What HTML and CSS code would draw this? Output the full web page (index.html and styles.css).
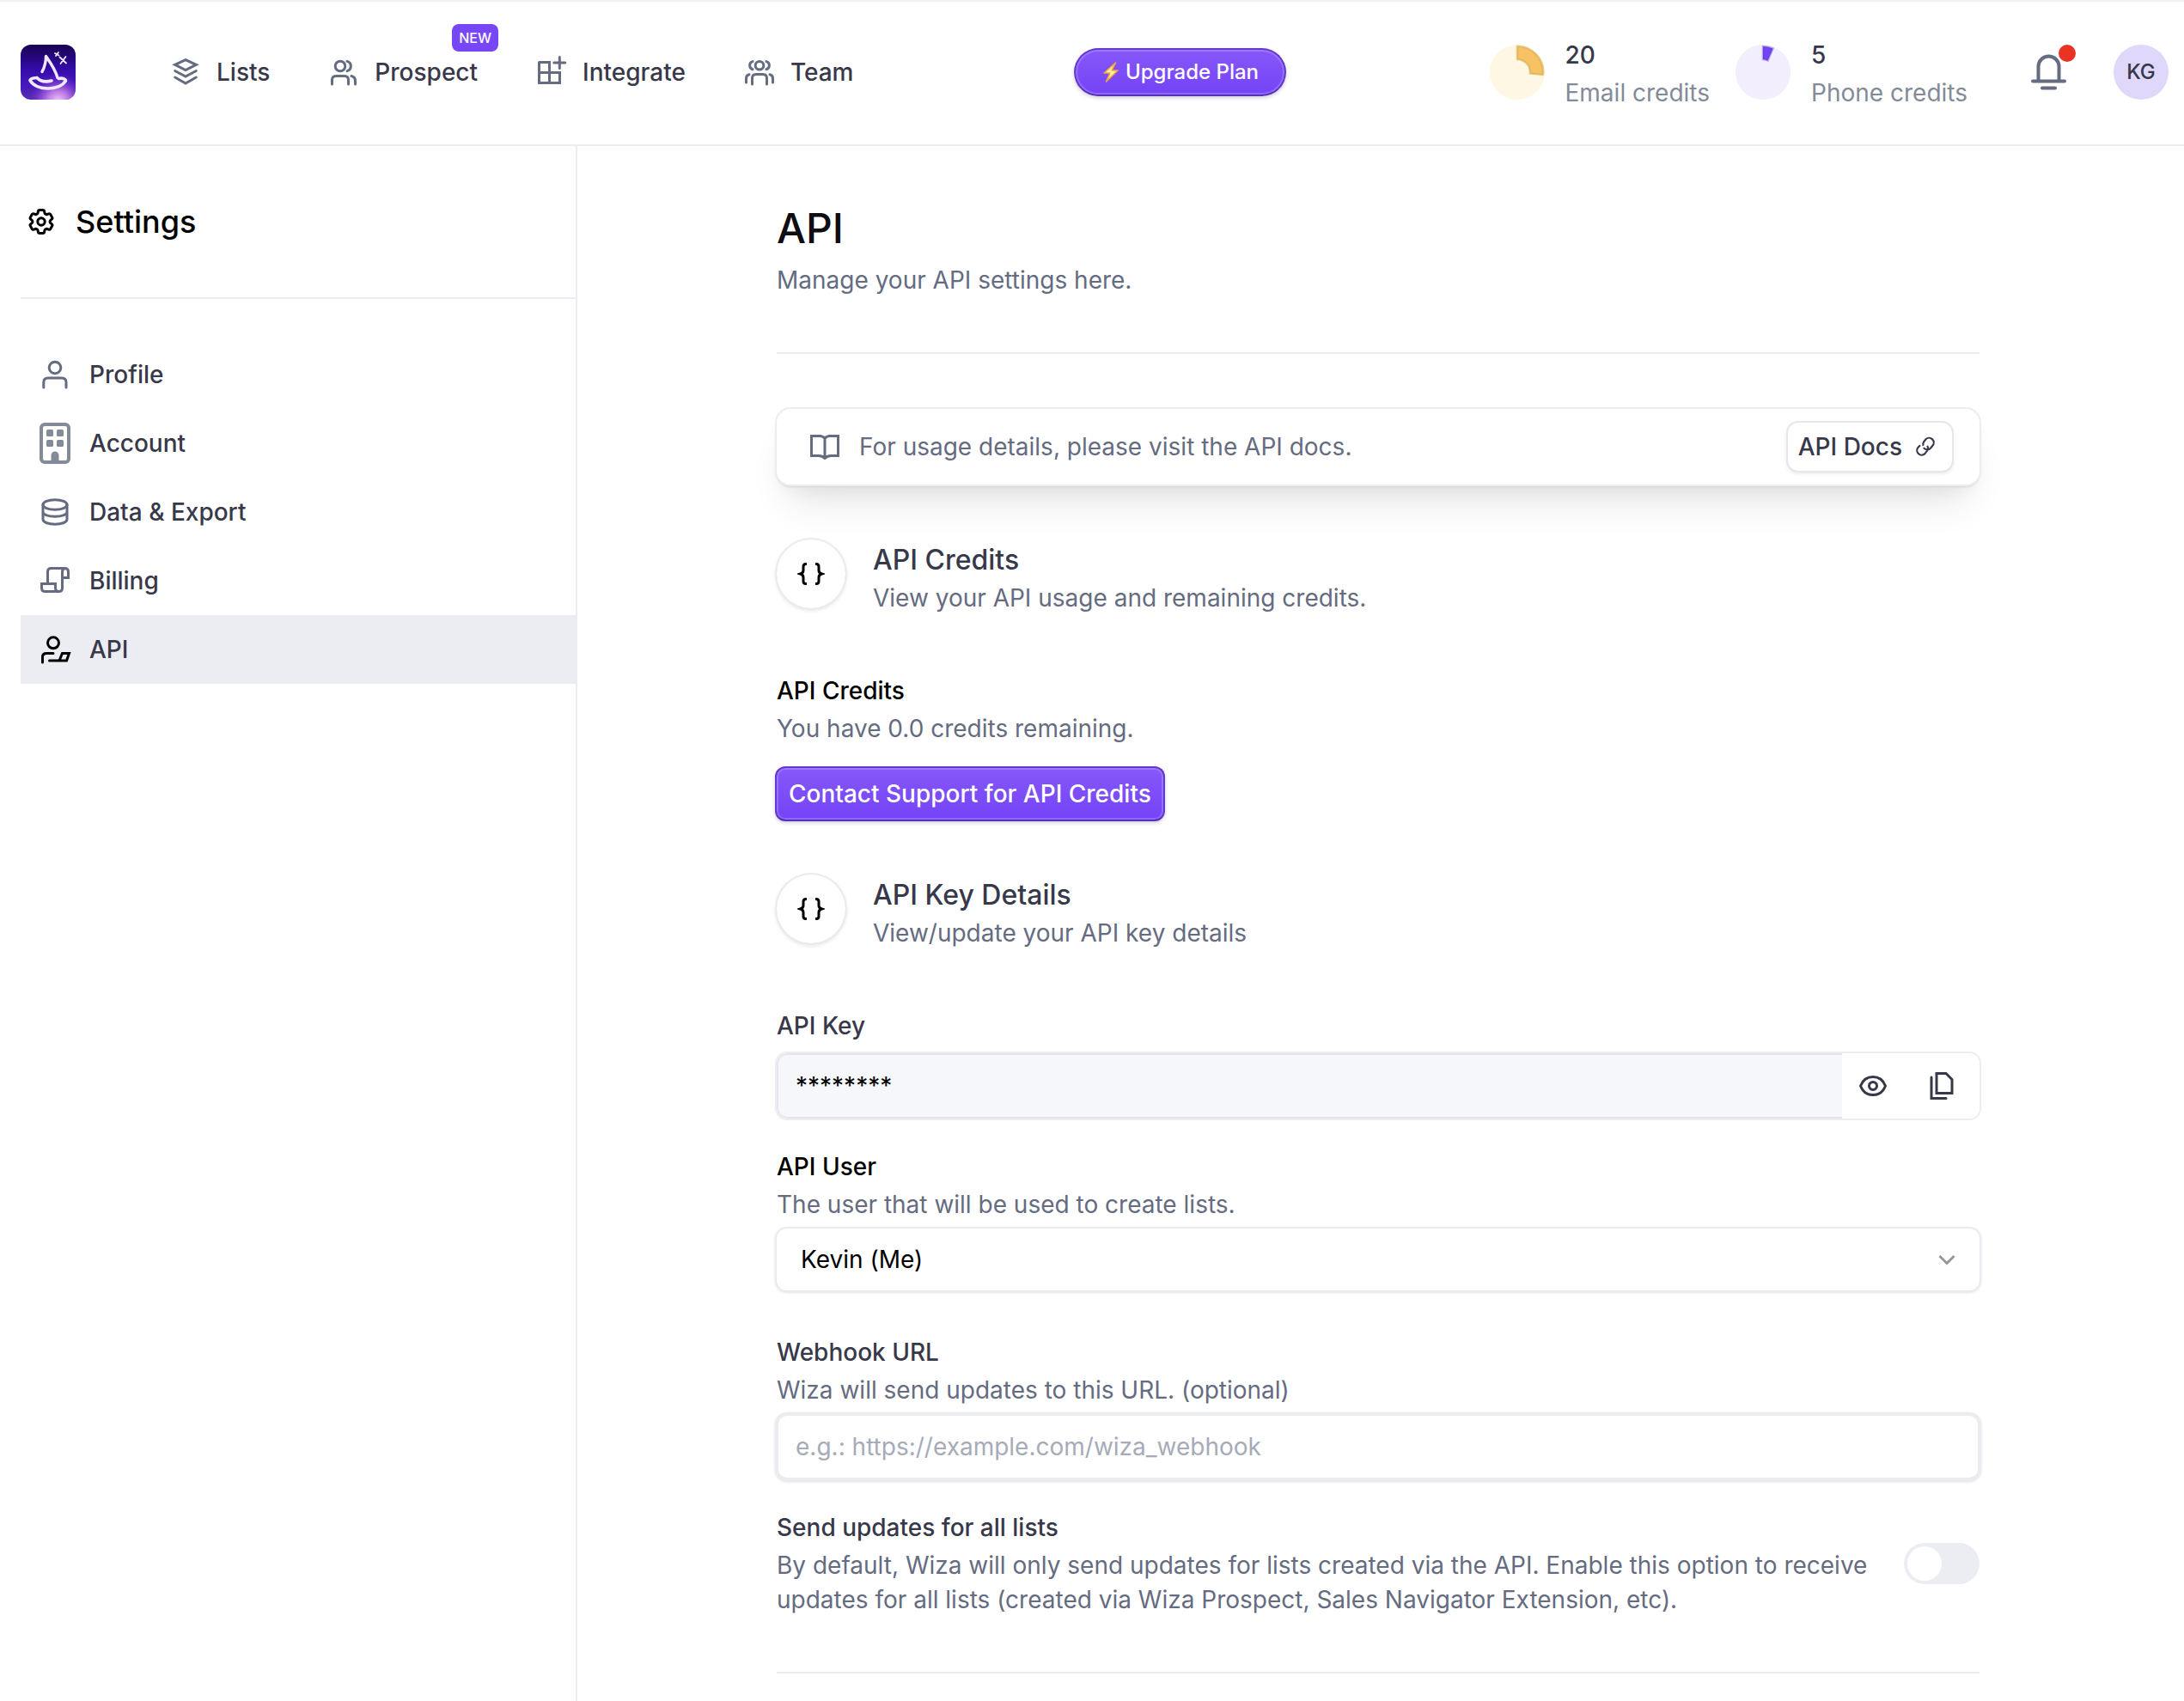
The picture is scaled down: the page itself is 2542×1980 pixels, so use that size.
FILE: index.html
```html
<!DOCTYPE html>
<html lang="en">
<head>
<meta charset="utf-8">
<meta name="viewport" content="width=device-width, initial-scale=1">
<title>API settings</title>
<link rel="stylesheet" href="styles.css">
</head>
<body>
<header class="topbar">
  <div class="topbar-left">
    <a class="logo" href="#" aria-label="Home">
      <svg width="64" height="64" viewBox="0 0 64 64">
        <defs>
          <linearGradient id="sky" x1="0" y1="0" x2="0" y2="1">
            <stop offset="0" stop-color="#17034f"/><stop offset=".45" stop-color="#350bab"/><stop offset=".8" stop-color="#4a1cba"/><stop offset="1" stop-color="#5a2fae"/>
          </linearGradient>
          <radialGradient id="glow" cx=".68" cy="1.04" r=".52">
            <stop offset="0" stop-color="#f6d3f8"/><stop offset=".4" stop-color="#c983ec" stop-opacity=".85"/><stop offset="1" stop-color="#7a2be0" stop-opacity="0"/>
          </radialGradient>
        </defs>
        <rect width="64" height="64" rx="12" fill="url(#sky)"/>
        <rect width="64" height="64" rx="12" fill="url(#glow)"/>
        <g fill="none" stroke="#f0e8ff" stroke-linecap="round" stroke-linejoin="round">
          <path d="M25 31.500C28 26 29.500 20 29.500 13.500C34 20 40 28 43 38.500" stroke-width="3.400"/>
          <path d="M19 38.500C15 38.500 11 40 11 41.500C18 54 45 54 52.500 42C52 39.500 48 38.500 44.500 39.500M19 38.500C23 43 30 43.500 36 42" stroke-width="3.600"/>
          <path d="M45.500 14.500L53 21.500M52.500 14L46.500 22M40 10L44.500 12.500M44 9L41 13" stroke-width="1.800"/>
        </g>
      </svg>
    </a>
    <nav class="nav" aria-label="Main">
      <a class="nav-item" href="#">
        <svg class="icon" viewBox="0 0 40 40"><path d="M20 5.700L32.300 11.300L20 17.500L7.700 11.300ZM7.700 18.500L20 25L32.300 18.500M7.700 26L20 33L32.300 26"/></svg>
        Lists
      </a>
      <a class="nav-item" href="#">
        <svg class="icon" viewBox="0 0 40 40"><circle cx="16" cy="13" r="5.800"/><path d="M24 7.400a5.800 5.800 0 0 1 0 11.200M6.500 34V29q0-4.500 4.500-4.500H21q4.500 0 4.500 4.500V34M29 24.500q4.500 1 4.500 6V34"/></svg>
        Prospect
        <span class="badge">NEW</span>
      </a>
      <a class="nav-item" href="#">
        <svg class="icon" viewBox="0 0 40 40"><path d="M5.500 8.500H17.500V32.500M5.500 8.500V32.500H29.500V20.500H5.500M29.300 2.500V15.500M22.800 9H35.800"/></svg>
        Integrate
      </a>
      <a class="nav-item" href="#">
        <svg class="icon" viewBox="0 0 40 40"><ellipse cx="20" cy="12.200" rx="4.800" ry="4.800"/><path d="M12 7.600C7.500 8.500 7.500 15.500 12 16.800M28 7.600C32.500 8.500 32.500 15.500 28 16.800M11.500 34V27q0-4.500 4.500-4.500H24q4.500 0 4.500 4.500V34M8 22.800Q4.500 23.500 4.500 27.500V32M32 22.800Q35.500 23.500 35.500 27.500V32"/></svg>
        Team
      </a>
    </nav>
  </div>
  <button class="upgrade" type="button">
    <svg width="18" height="24" viewBox="0 0 18 24"><path d="M14.500 1L1 13H8L3.500 23L17 10H10Z" fill="#fff3a3" stroke="#f0a63c" stroke-width="1.600" stroke-linejoin="round"/></svg>
    Upgrade Plan
  </button>
  <div class="topbar-right">
    <div class="credit">
      <svg width="64" height="64" viewBox="0 0 64 64"><circle cx="32" cy="32" r="32" fill="#fef7e4"/><path d="M32 2A30 30 0 0 1 61.900 35L46.900 33.500A15 15 0 0 0 32 17Z" fill="#f6c263" stroke="#dcb056" stroke-opacity=".7" stroke-width="2.500"/></svg>
      <div><b>20</b><span>Email credits</span></div>
    </div>
    <div class="credit">
      <svg width="64" height="64" viewBox="0 0 64 64"><circle cx="32" cy="32" r="32" fill="#f2eefe"/><path d="M32 2A30 30 0 0 1 43.500 4.500L37.500 18.500A15 15 0 0 0 32 17Z" fill="#7445f7" stroke="#5a35c4" stroke-opacity=".4" stroke-width="2.500"/></svg>
      <div><b>5</b><span>Phone credits</span></div>
    </div>
    <button class="bell" type="button" aria-label="Notifications">
      <svg width="48" height="48" viewBox="0 0 48 48"><path d="M12.500 34V17.500a12 12 0 0 1 24 0V34M6 34.500H43M17 42.500H32"/></svg>
      <span class="dot"></span>
    </button>
    <button class="avatar" type="button">KG</button>
  </div>
</header>
<div class="layout">
  <aside class="sidebar">
    <h2 class="sidebar-title">
      <svg width="36" height="36" viewBox="0 0 24 24"><path d="M9.594 3.940c.09-.542.56-.94 1.110-.94h2.593c.55 0 1.020.398 1.110.94l.213 1.281c.063.374.313.686.645.87.074.04.147.083.22.127.325.196.72.257 1.075.124l1.217-.456a1.125 1.125 0 0 1 1.370.49l1.296 2.247a1.125 1.125 0 0 1-.26 1.431l-1.003.827c-.293.241-.438.613-.43.992a7.723 7.723 0 0 1 0 .255c-.008.378.137.75.43.991l1.004.827c.424.35.534.955.26 1.430l-1.298 2.247a1.125 1.125 0 0 1-1.369.491l-1.217-.456c-.355-.133-.75-.072-1.076.124a6.470 6.470 0 0 1-.22.128c-.331.183-.581.495-.644.869l-.213 1.281c-.09.543-.56.94-1.110.94h-2.594c-.55 0-1.019-.398-1.110-.94l-.213-1.281c-.062-.374-.312-.686-.644-.87a6.520 6.520 0 0 1-.22-.127c-.325-.196-.72-.257-1.076-.124l-1.217.456a1.125 1.125 0 0 1-1.369-.49l-1.297-2.247a1.125 1.125 0 0 1 .26-1.431l1.004-.827c.292-.24.437-.613.43-.991a6.932 6.932 0 0 1 0-.255c.007-.38-.138-.751-.43-.992l-1.004-.827a1.125 1.125 0 0 1-.26-1.430l1.297-2.247a1.125 1.125 0 0 1 1.370-.491l1.216.456c.356.133.751.072 1.076-.124.072-.044.146-.086.22-.128.332-.183.582-.495.644-.869l.214-1.280Z"/><circle cx="12" cy="12" r="2.800"/></svg>
      Settings
    </h2>
    <nav class="side-nav" aria-label="Settings">
      <a class="side-item" href="#">
        <svg class="icon" viewBox="0 0 40 40"><circle cx="20" cy="12" r="6.800"/><path d="M6.800 35V29q0-5 5-5H28q5 0 5 5V35"/></svg>
        Profile
      </a>
      <a class="side-item" href="#">
        <svg class="icon" viewBox="0 0 40 48"><g transform="translate(2 0)" fill="#838b98" stroke="none"><path fill-rule="evenodd" d="M6 0H30a6 6 0 0 1 6 6V42a6 6 0 0 1-6 6H6a6 6 0 0 1-6-6V6a6 6 0 0 1 6-6ZM6 4a2 2 0 0 0-2 2V42a2 2 0 0 0 2 2H30a2 2 0 0 0 2-2V6a2 2 0 0 0-2-2Z"/><rect x="8" y="8" width="8" height="8" rx="1.500"/><rect x="20" y="8" width="8" height="8" rx="1.500"/><rect x="8" y="20" width="8" height="8" rx="1.500"/><rect x="20" y="20" width="8" height="8" rx="1.500"/><path d="M13.500 45V38a4.500 4.500 0 0 1 9 0V45Z"/></g></svg>
        Account
      </a>
      <a class="side-item" href="#">
        <svg class="icon" viewBox="0 0 40 40"><ellipse cx="20" cy="11.500" rx="14" ry="5.800"/><path d="M6 11.500V28.500C6 36 34 36 34 28.500V11.500M6 20C6 27 34 27 34 20"/></svg>
        Data &amp; Export
      </a>
      <a class="side-item" href="#">
        <svg class="icon" viewBox="0 0 40 40"><path d="M11.500 23.500V9.500q0-4 4-4H32q-3.500.5-3.500 4V28.500q0 4-4 4H8.500q-4 0-4-4V23.500H20.500V28.500q0 4 4 4M32 5.500q3.500.5 3.500 4V16.500H28.500"/></svg>
        Billing
      </a>
      <a class="side-item active" href="#" aria-current="page">
        <svg class="icon" viewBox="0 0 40 40"><circle cx="18" cy="12.300" r="6.500"/><path d="M5.500 35V29q0-4.500 4.500-4.500H18M13.500 33H33.500L36.500 24.500H28.500L25 33"/></svg>
        API
      </a>
    </nav>
  </aside>
  <main class="main">
    <div class="content">
      <div class="page-head">
        <h1>API</h1>
        <p>Manage your API settings here.</p>
      </div>
      <div class="notice">
        <svg class="icon" viewBox="0 0 40 40"><path d="M20 33.500V10M20 33.500Q17 30.500 13 30.500H4.500V7.500H14Q18 7.500 20 10.500Q22 7.500 26 7.500H35.500V30.500H27Q23 30.500 20 33.500Z"/></svg>
        <p>For usage details, please visit the API docs.</p>
        <a class="docs" href="#">API Docs
          <svg width="26" height="26" viewBox="0 0 24 24"><path d="M10 13a5 5 0 0 0 7.540.54l2-2.500a5 5 0 0 0-7.070-7.070l-2 2.500a5 5 0 0 0-.8 4.500M14 11a5 5 0 0 1 .5 4.500l-3 4a5 5 0 0 1-7.070-7.070l2-2"/></svg>
        </a>
      </div>

      <section>
        <div class="section-head">
          <span class="disc"><svg width="32" height="32" viewBox="0 0 32 32"><path d="M11 4.500H10Q7 4.500 7 7.500V12Q7 15 3.500 16Q7 17 7 20V24.500Q7 27.500 10 27.500H11M21 4.500H22Q25 4.500 25 7.500V12Q25 15 28.500 16Q25 17 25 20V24.500Q25 27.500 22 27.500H21"/></svg></span>
          <div>
            <h2>API Credits</h2>
            <p>View your API usage and remaining credits.</p>
          </div>
        </div>
        <div class="text-pair">
          <h3 class="black">API Credits</h3>
          <p>You have 0.0 credits remaining.</p>
        </div>
        <button class="primary" type="button">Contact Support for API Credits</button>
      </section>

      <section>
        <div class="section-head">
          <span class="disc"><svg width="32" height="32" viewBox="0 0 32 32"><path d="M11 4.500H10Q7 4.500 7 7.500V12Q7 15 3.500 16Q7 17 7 20V24.500Q7 27.500 10 27.500H11M21 4.500H22Q25 4.500 25 7.500V12Q25 15 28.500 16Q25 17 25 20V24.500Q25 27.500 22 27.500H21"/></svg></span>
          <div>
            <h2>API Key Details</h2>
            <p>View/update your API key details</p>
          </div>
        </div>
        <div class="field">
          <label for="api-key">API Key</label>
          <div class="key-box">
            <input id="api-key" type="text" value="********" readonly>
            <button type="button" aria-label="Show key"><svg class="icon" viewBox="0 0 40 40"><path d="M5.500 20C8 13.500 13.500 9.500 20 9.500S32 13.500 34.500 20C32 26.500 26.500 30.500 20 30.500S8 26.500 5.500 20Z"/><circle cx="20" cy="20" r="4.500"/></svg></button>
            <button type="button" aria-label="Copy key"><svg class="icon" viewBox="0 0 40 40"><path d="M14 5.500H25L32 12.500V28.500H14ZM8 10V34.500H25"/></svg></button>
          </div>
        </div>
        <div class="field user-field">
          <div class="text-pair">
            <label class="black" for="api-user">API User</label>
            <p>The user that will be used to create lists.</p>
          </div>
          <div class="select-box">
            <select id="api-user"><option>Kevin (Me)</option></select>
            <svg width="24" height="24" viewBox="0 0 24 24"><path d="M3.500 8L12 16.500L20.500 8"/></svg>
          </div>
        </div>
        <div class="field">
          <div class="text-pair">
            <label for="webhook">Webhook URL</label>
            <p>Wiza will send updates to this URL. (optional)</p>
          </div>
          <input class="text-input" id="webhook" type="url" placeholder="e.g.: https://example.com/wiza_webhook">
        </div>
        <div class="toggle-row">
          <div class="text-pair">
            <label for="all-lists">Send updates for all lists</label>
            <p>By default, Wiza will only send updates for lists created via the API. Enable this option to receive updates for all lists (created via Wiza Prospect, Sales Navigator Extension, etc).</p>
          </div>
          <input class="toggle" id="all-lists" type="checkbox" role="switch">
        </div>
      </section>
    </div>
  </main>
</div>
</body>
</html>
```
FILE: styles.css
```css
:root {
  --ink: #373849;
  --muted: #656b80;
  --line: #ecedf2;
  --violet: #7747f7;
}

* { box-sizing: border-box; }

body {
  margin: 0;
  min-height: 100vh;
  display: flex;
  flex-direction: column;
  background: #fff;
  color: var(--ink);
  font: 400 28px/40px Inter, "Liberation Sans", sans-serif;
}

h1, h2, h3, p { margin: 0; }
a { color: inherit; text-decoration: none; }
button, input, select { font: inherit; color: inherit; margin: 0; }
button { cursor: pointer; }
svg { display: block; flex: none; fill: none; }

.icon {
  width: 40px;
  height: 40px;
  stroke: var(--muted);
  stroke-width: 3;
  stroke-linecap: round;
}

/* Top bar */
.topbar {
  display: flex;
  align-items: center;
  justify-content: space-between;
  height: 170px;
  padding: 0 18px 2px 24px;
  border-top: 2px solid #f1f1f1;
  border-bottom: 2px solid var(--line);
}
.topbar-left { display: flex; align-items: center; gap: 108px; padding-right: 20px; }
.nav { display: flex; gap: 66px; }
.nav-item {
  position: relative;
  display: flex;
  align-items: center;
  gap: 16px;
  font-weight: 500;
}
.badge {
  position: absolute;
  right: -24px;
  bottom: 44px;
  padding: 0 8px;
  border-radius: 8px;
  background: var(--violet);
  color: #fff;
  font-size: 16px;
  line-height: 32px;
}

.upgrade, .primary {
  border: 2px solid #6339cf;
  border-bottom-color: #5530b8;
  background: linear-gradient(#8658fa, #7443f6);
  box-shadow: inset 0 0 0 2px rgba(255, 255, 255, .2), 0 2px 4px rgba(30, 20, 80, .2);
  color: #fff;
  font-weight: 500;
}
.upgrade {
  display: flex;
  align-items: center;
  gap: 8px;
  height: 56px;
  padding: 0 30px 0 32px;
  border-radius: 28px;
  font-size: 24px;
}

.topbar-right { display: flex; align-items: center; }
.credit { display: flex; align-items: center; gap: 24px; margin-right: 30px; }
.credit div { display: flex; flex-direction: column; gap: 4px; padding-top: 4px; }
.credit b { font-weight: 500; }
.credit span { color: #838b98; }
.bell {
  position: relative;
  margin: 0 52px 0 40px;
  padding: 0;
  border: 0;
  background: none;
}
.bell svg { stroke: var(--muted); stroke-width: 4; stroke-linecap: round; }
.dot {
  position: absolute;
  top: -8px;
  right: -8px;
  width: 20px;
  height: 20px;
  border-radius: 50%;
  background: #ea3323;
}
.avatar {
  width: 64px;
  height: 64px;
  padding: 0;
  border: 0;
  border-radius: 50%;
  background: #e0d8fa;
  font-size: 24px;
  font-weight: 500;
}

/* Page layout */
.layout { display: flex; flex: 1; }
.sidebar {
  flex: none;
  width: 672px;
  padding-left: 24px;
  border-right: 2px solid var(--line);
}
.sidebar-title {
  display: flex;
  align-items: center;
  gap: 22px;
  height: 178px;
  padding-left: 6px;
  border-bottom: 2px solid var(--line);
  color: #000;
  font-size: 36px;
  font-weight: 500;
}
.sidebar-title svg { stroke: #000; stroke-width: 2; }
.side-nav { padding-top: 48px; }
.side-item {
  display: flex;
  align-items: center;
  gap: 20px;
  height: 80px;
  padding-left: 20px;
  font-weight: 500;
}
.side-item .icon { height: 48px; }
.side-item.active { background: var(--line); }
.side-item.active .icon { stroke: #000; }

.main { flex: 1; padding: 64px 6px 32px 0; }
.content { max-width: 1400px; margin: 0 auto; }
.content p { color: var(--muted); }

.page-head {
  padding-bottom: 64px;
  border-bottom: 2px solid var(--line);
}
h1 {
  margin-bottom: 8px;
  color: #0e0e12;
  font-size: 48px;
  line-height: 64px;
  font-weight: 500;
}

.notice {
  display: flex;
  align-items: center;
  gap: 20px;
  height: 88px;
  margin: 64px 0;
  padding: 0 32px 0 36px;
  border-radius: 16px;
  background: #fff;
  box-shadow: 0 0 0 2px var(--line), 0 2px 2px 1px #d3d6dc, 0 32px 48px -16px rgba(0, 0, 0, .12), 0 12px 24px -8px rgba(0, 0, 0, .06);
}
.notice p { flex: 1; }
.docs {
  display: flex;
  align-items: center;
  gap: 14px;
  height: 56px;
  padding: 0 18px 0 12px;
  border-radius: 12px;
  box-shadow: 0 0 0 2px #e5e7ee, 0 2px 4px 1px rgba(30, 40, 70, .12);
  font-weight: 500;
}
.docs svg { stroke: var(--ink); stroke-width: 2; }

section { margin-bottom: 64px; }
.section-head {
  display: flex;
  gap: 32px;
  margin-bottom: 68px;
}
.section-head h2 { font-size: 32px; line-height: 48px; font-weight: 500; }
.disc {
  display: flex;
  align-items: center;
  justify-content: center;
  width: 80px;
  height: 80px;
  border-radius: 50%;
  box-shadow: 0 0 0 2px #e9ebf1, 0 2px 4px 1px rgba(30, 40, 70, .12);
}
.disc svg { stroke: #000; stroke-width: 3; }

.text-pair { display: flex; flex-direction: column; gap: 4px; }
h3, label { font-size: 28px; font-weight: 500; }
.black { color: #000; }

.primary {
  height: 64px;
  margin: 24px -2px -2px;
  padding: 0 14px;
  border-radius: 12px;
}

.field { margin: 0 -2px 34px; }
.field .text-pair, .field > label { margin-left: 2px; }
.user-field { margin-bottom: 50px; }

.key-box {
  display: flex;
  height: 80px;
  margin-top: 10px;
  border: 2px solid var(--line);
  border-radius: 14px;
  overflow: hidden;
}
.key-box input {
  flex: 1;
  min-width: 0;
  padding: 0 20px;
  border: 2px solid #e3e6ec;
  border-right: 0;
  border-radius: 12px 0 0 12px;
  background: #f6f7fa;
  color: #000;
}
.key-box button {
  display: flex;
  align-items: center;
  justify-content: center;
  width: 80px;
  padding: 0 8px 0 0;
  border: 0;
  background: #fff;
}
.key-box .icon { stroke: var(--ink); }

.select-box { position: relative; margin-top: 6px; }
.select-box select {
  appearance: none;
  display: block;
  width: 100%;
  height: 76px;
  padding: 0 28px;
  border: 2px solid #eaebf1;
  border-radius: 14px;
  background: #fff;
  box-shadow: 0 1px 3px rgba(30, 40, 70, .12);
  color: #000;
}
.select-box svg {
  position: absolute;
  top: 26px;
  right: 28px;
  stroke: #979797;
  stroke-width: 3;
  pointer-events: none;
}

.text-input {
  display: block;
  width: 100%;
  height: 80px;
  margin-top: 6px;
  padding: 0 20px;
  border: 4px solid #ebecf0;
  border-radius: 14px;
  box-shadow: 0 1px 3px rgba(30, 40, 70, .14);
}
.text-input::placeholder { color: #a6abb9; opacity: 1; }

.toggle-row {
  display: flex;
  align-items: center;
  gap: 40px;
  padding-bottom: 64px;
  border-bottom: 2px solid var(--line);
}
.toggle-row .text-pair { flex: 1; }
.toggle {
  appearance: none;
  display: flex;
  flex: none;
  width: 88px;
  height: 48px;
  padding: 4px;
  border-radius: 24px;
  background: var(--line);
}
.toggle::before {
  content: "";
  width: 40px;
  height: 40px;
  border-radius: 50%;
  background: #fff;
}
.toggle:checked { background: var(--violet); justify-content: flex-end; }
```
